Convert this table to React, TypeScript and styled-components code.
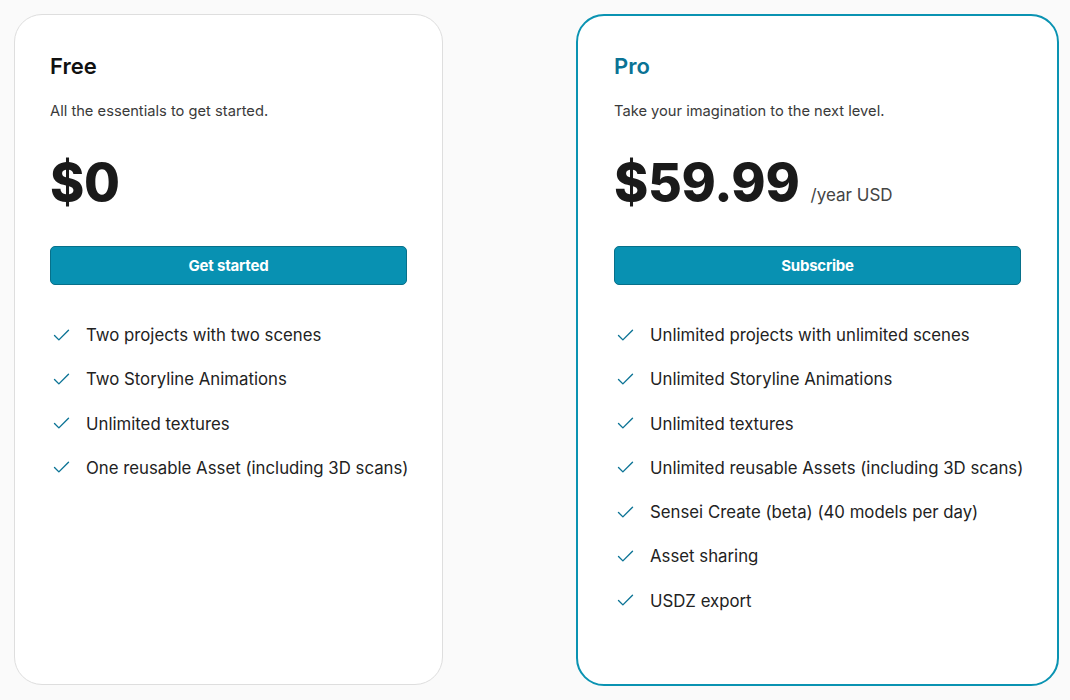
import React from "react";
import styled, { createGlobalStyle } from "styled-components";
import { Check } from "lucide-react";

const Global = createGlobalStyle`
  html, body { margin: 0; padding: 0; background: #fafafa; }
  body { font-family: Inter, "Noto Sans", sans-serif; color: #1a1a1a; }
`;

const Page = styled.div`
  display: flex;
  align-items: flex-start;
  gap: 133px;
  padding: 14px 0 0 14px;
`;

const Card = styled.div<{ $pro?: boolean; $w: number }>`
  box-sizing: border-box;
  width: ${(p) => p.$w}px;
  height: ${(p) => (p.$pro ? 672 : 671)}px;
  background: #fff;
  border: ${(p) => (p.$pro ? "2px solid #0a93b2" : "1px solid #dedede")};
  border-radius: 28px;
  padding: ${(p) => (p.$pro ? "36px 36px 0 36px" : "37px 35px 0 35px")};
  display: flex;
  flex-direction: column;
`;

const Title = styled.h2<{ $pro?: boolean }>`
  margin: 0;
  font-size: 22px;
  line-height: 28px;
  font-weight: 600;
  color: ${(p) => (p.$pro ? "#0b7395" : "#111")};
`;

const Subtitle = styled.p`
  margin: 21px 0 0;
  font-size: 14.7px;
  line-height: 20px;
  color: #3a3a3a;
`;

const PriceRow = styled.div`
  display: flex;
  align-items: baseline;
  gap: 11px;
  margin-top: 28px;
`;

const Price = styled.span`
  font-size: 52px;
  line-height: 68px;
  font-weight: 800;
  color: #1a1a1a;
  letter-spacing: -0.3px;
`;

const Period = styled.span`
  font-size: 17px;
  color: #444;
`;

const Button = styled.button`
  margin-top: 29px;
  height: 39px;
  width: 100%;
  border: 1px solid #07708a;
  border-radius: 5px;
  background: #0891b2;
  color: #fff;
  font-family: Inter, "Noto Sans", sans-serif;
  font-size: 15px;
  font-weight: 700;
  letter-spacing: -0.2px;
  cursor: pointer;
`;

const List = styled.ul`
  list-style: none;
  margin: 38px 0 0;
  padding: 0;
  display: flex;
  flex-direction: column;
  gap: 20.3px;
`;

const Item = styled.li`
  display: flex;
  align-items: center;
  gap: 14px;
  font-size: 16.8px;
  line-height: 24px;
  color: #222;
  white-space: nowrap;
  svg { flex: none; color: #0b7395; margin-left: 1px; }
`;

type Plan = {
  name: string;
  pro?: boolean;
  width: number;
  desc: string;
  price: string;
  period?: string;
  cta: string;
  features: string[];
};

const plans: Plan[] = [
  {
    name: "Free",
    width: 429,
    desc: "All the essentials to get started.",
    price: "$0",
    cta: "Get started",
    features: [
      "Two projects with two scenes",
      "Two Storyline Animations",
      "Unlimited textures",
      "One reusable Asset (including 3D scans)",
    ],
  },
  {
    name: "Pro",
    pro: true,
    width: 483,
    desc: "Take your imagination to the next level.",
    price: "$59.99",
    period: "/year USD",
    cta: "Subscribe",
    features: [
      "Unlimited projects with unlimited scenes",
      "Unlimited Storyline Animations",
      "Unlimited textures",
      "Unlimited reusable Assets (including 3D scans)",
      "Sensei Create (beta) (40 models per day)",
      "Asset sharing",
      "USDZ export",
    ],
  },
];

export default function App() {
  return (
    <>
      <Global />
      <Page>
        {plans.map((p) => (
          <Card key={p.name} $pro={p.pro} $w={p.width}>
            <Title $pro={p.pro}>{p.name}</Title>
            <Subtitle>{p.desc}</Subtitle>
            <PriceRow>
              <Price>{p.price}</Price>
              {p.period && <Period>{p.period}</Period>}
            </PriceRow>
            <Button>{p.cta}</Button>
            <List>
              {p.features.map((f) => (
                <Item key={f}>
                  <Check size={21} strokeWidth={1.6} />
                  {f}
                </Item>
              ))}
            </List>
          </Card>
        ))}
      </Page>
    </>
  );
}
